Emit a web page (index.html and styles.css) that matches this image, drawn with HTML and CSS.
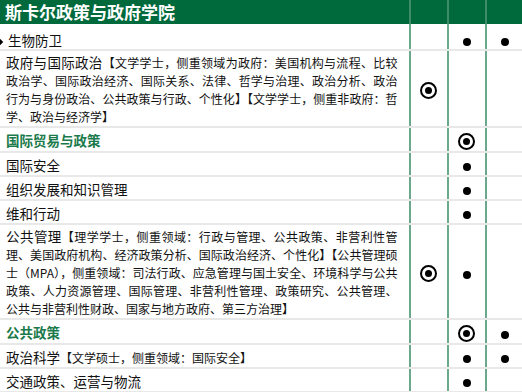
FILE: index.html
```html
<!DOCTYPE html>
<html lang="zh">
<head>
<meta charset="utf-8">
<link rel="stylesheet" href="styles.css">
</head>
<body>
<table class="grid">
  <colgroup>
    <col class="c-name"><col class="c-mark"><col class="c-mark"><col class="c-mark">
  </colgroup>
  <thead>
    <tr class="head">
      <th>斯卡尔政策与政府学院</th><th></th><th></th><th></th>
    </tr>
  </thead>
  <tbody>
    <tr class="first">
      <td class="name"><span class="pointer"></span>生物防卫</td>
      <td></td><td><span class="dot"></span></td><td><span class="dot"></span></td>
    </tr>
    <tr>
      <td class="name">政府与国际政治<span class="note">【文学学士，侧重领域为政府：美国机构与流程、比较政治学、国际政治经济、国际关系、法律、哲学与治理、政治分析、政治行为与身份政治、公共政策与行政、个性化】【文学学士，侧重非政府：哲学、政治与经济学】</span></td>
      <td><span class="ring"></span></td><td></td><td></td>
    </tr>
    <tr>
      <td class="name green">国际贸易与政策</td>
      <td></td><td><span class="ring"></span></td><td></td>
    </tr>
    <tr>
      <td class="name">国际安全</td>
      <td></td><td><span class="dot"></span></td><td></td>
    </tr>
    <tr>
      <td class="name">组织发展和知识管理</td>
      <td></td><td><span class="dot"></span></td><td></td>
    </tr>
    <tr>
      <td class="name">维和行动</td>
      <td></td><td><span class="dot"></span></td><td></td>
    </tr>
    <tr>
      <td class="name">公共管理<span class="note">【理学学士，侧重领域：行政与管理、公共政策、非营利性管理、美国政府机构、经济政策分析、国际政治经济、个性化】【公共管理硕士（MPA），侧重领域：司法行政、应急管理与国土安全、环境科学与公共政策、人力资源管理、国际管理、非营利性管理、政策研究、公共管理、公共与非营利性财政、国家与地方政府、第三方治理】</span></td>
      <td><span class="ring"></span></td><td><span class="dot"></span></td><td></td>
    </tr>
    <tr>
      <td class="name green">公共政策</td>
      <td></td><td><span class="ring"></span></td><td><span class="dot"></span></td>
    </tr>
    <tr>
      <td class="name">政治科学<span class="note">【文学硕士，侧重领域：国际安全】</span></td>
      <td></td><td><span class="dot"></span></td><td><span class="dot"></span></td>
    </tr>
    <tr>
      <td class="name">交通政策、运营与物流</td>
      <td></td><td><span class="dot"></span></td><td></td>
    </tr>
  </tbody>
</table>
</body>
</html>
```

FILE: styles.css
```css
html, body {
  margin: 0;
  padding: 0;
  background: #ffffff;
  overflow: hidden;
}

body {
  font-family: "Noto Sans CJK SC", "Noto Sans", sans-serif;
  color: #111111;
}

.grid {
  border-collapse: collapse;
  table-layout: fixed;
  width: 524px;
}

.c-name { width: 408px; }
.c-mark { width: 38px; }

.head th {
  background: #006a3c;
  color: #ffffff;
  font-size: 17px;
  font-weight: bold;
  text-align: left;
  height: 24px;
  padding: 0 5px;
  line-height: 24px;
  border-left: 2px solid #3f8c66;
}

.head th:first-child {
  border-left: none;
}

td {
  vertical-align: middle;
  text-align: center;
  border-left: 2px solid #6aaa8a;
  border-bottom: 2px solid #e8e8e8;
  padding: 2px 0 1px;
  line-height: 18px;
  height: 19px;
}

td.name {
  border-left: none;
  text-align: justify;
  font-size: 13.5px;
  padding: 2px 11px 1px 6px;
  position: relative;
}

.first td {
  padding-top: 6px;
  padding-bottom: 0;
}

.first td.name {
  padding-left: 8px;
}

.note {
  font-size: 12px;
  line-height: 12px;
}

.green {
  color: #1b7a4c;
  font-weight: bold;
}

.pointer {
  position: absolute;
  left: -4px;
  top: 15px;
  width: 6px;
  height: 6px;
  background: #000000;
  transform: rotate(45deg);
}

.dot {
  display: inline-block;
  width: 8px;
  height: 8px;
  border-radius: 50%;
  background: #000000;
  vertical-align: middle;
}

.ring {
  display: inline-block;
  box-sizing: border-box;
  width: 17px;
  height: 17px;
  border-radius: 50%;
  border: 2px solid #000000;
  position: relative;
  vertical-align: middle;
}

.ring::after {
  content: "";
  position: absolute;
  left: 50%;
  top: 50%;
  width: 7px;
  height: 7px;
  margin: -3.5px 0 0 -3.5px;
  border-radius: 50%;
  background: #000000;
}
```
